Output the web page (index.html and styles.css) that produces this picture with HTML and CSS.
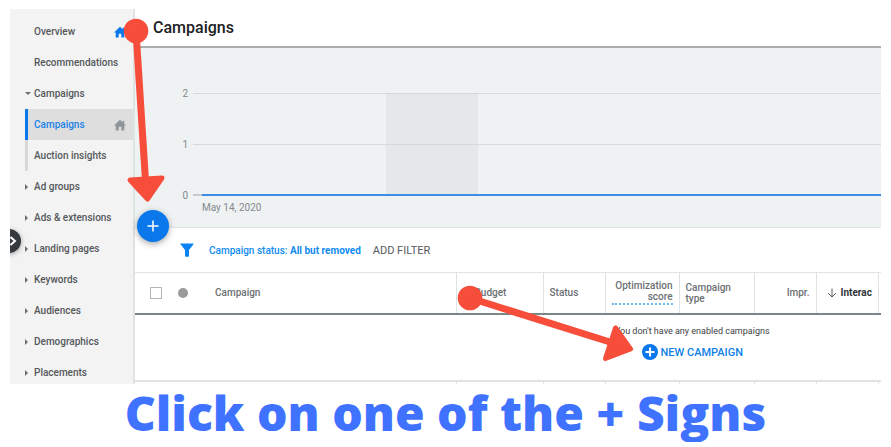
FILE: index.html
```html
<!DOCTYPE html>
<html lang="en">
<head>
  <meta charset="UTF-8" />
  <meta name="viewport" content="width=device-width, initial-scale=1.0" />
  <title>Campaigns</title>
  <link rel="stylesheet" href="styles.css">
</head>
<body>
  <div class="app">
    <nav class="sidebar">
      <ul class="nav-list">
        <li><a class="nav-link" href="#">Overview
          <svg class="home blue" viewBox="0 0 12 12"><path d="M6 .8 0 6.4h1.7V11.4h3V7.8h2.6v3.6h3V6.4H12L10.2 4.7V1.8H8.6v1.4z"/></svg></a></li>
        <li><a class="nav-link" href="#">Recommendations</a></li>
        <li><a class="nav-link open" href="#">Campaigns</a></li>
        <li><a class="nav-link sub active" href="#">Campaigns
          <svg class="home" viewBox="0 0 12 12"><path d="M6 .8 0 6.4h1.7V11.4h3V7.8h2.6v3.6h3V6.4H12L10.2 4.7V1.8H8.6v1.4z"/></svg></a></li>
        <li><a class="nav-link sub" href="#">Auction insights</a></li>
        <li><a class="nav-link closed" href="#">Ad groups</a></li>
        <li><a class="nav-link closed" href="#">Ads &amp; extensions</a></li>
        <li><a class="nav-link closed" href="#">Landing pages</a></li>
        <li><a class="nav-link closed" href="#">Keywords</a></li>
        <li><a class="nav-link closed" href="#">Audiences</a></li>
        <li><a class="nav-link closed" href="#">Demographics</a></li>
        <li><a class="nav-link closed" href="#">Placements</a></li>
      </ul>
    </nav>

    <main class="main">
      <header class="header">
        <h1>Campaigns</h1>
      </header>

      <section class="chart">
        <div class="chart-band"></div>
        <div class="chart-row"><span>2</span><i class="line"></i></div>
        <div class="chart-row"><span>1</span><i class="line"></i></div>
        <div class="chart-row zero"><span>0</span><i class="line"></i></div>
        <p class="chart-date">May 14, 2020</p>
      </section>

      <div class="filters">
        <svg class="funnel" viewBox="0 0 14 14"><path d="M.8.5h12.4q.8 0 .3.7L9 7v6q0 .8-.8.8H5.8Q5 13.800 5 13V7L.5 1.200Q0 .5.8.5z"/></svg>
        <button class="filter-status">Campaign status: <b>All but removed</b></button>
        <button class="filter-add">ADD FILTER</button>
      </div>

      <div class="table-wrap">
        <table>
          <colgroup>
            <col class="w-check"><col class="w-dot"><col class="w-name"><col class="w-budget"><col class="w-small">
            <col class="w-score"><col class="w-type"><col class="w-small"><col class="w-small"><col>
          </colgroup>
          <thead>
            <tr>
              <th class="check"><input type="checkbox" aria-label="Select all campaigns"></th>
              <th class="state"><span class="dot"></span></th>
              <th class="name">Campaign</th>
              <th class="budget">Budget</th>
              <th>Status</th>
              <th class="right"><span class="dotted">Optimization score</span></th>
              <th class="type">Campaign type</th>
              <th class="right">Impr.</th>
              <th class="sorted">
                <span class="sort">
                  <svg viewBox="0 0 10 10"><path d="M5 .5v8.500M1 5l4 4 4-4"/></svg>
                  <span class="sort-text">Interac</span>
                </span>
              </th>
              <th></th>
            </tr>
          </thead>
          <tbody>
            <tr>
              <td class="empty" colspan="10">
                <p>You don't have any enabled campaigns</p>
                <button class="new-campaign">
                  <svg viewBox="0 0 16 16"><circle cx="8" cy="8" r="8"/><path d="M8 3.500v9M3.500 8h9"/></svg>
                  NEW CAMPAIGN
                </button>
              </td>
            </tr>
            <tr class="total">
              <td></td><td></td><td></td><td></td><td></td><td></td><td></td><td></td><td></td><td></td>
            </tr>
          </tbody>
        </table>
      </div>
    </main>

    <button class="collapse" aria-label="Toggle menu">
      <svg viewBox="0 0 8 10"><path d="M1.500 1l4.500 4-4.500 4"/></svg>
    </button>
    <button class="fab" aria-label="Create">
      <svg viewBox="0 0 12 12"><path d="M6 .5v11M.5 6h11"/></svg>
    </button>

    <svg class="arrow arrow-fab" viewBox="0 0 42 190">
      <circle cx="16" cy="17" r="12.300"/>
      <path class="shaft" d="M16 17l9.500 150"/>
      <path class="head" d="M10 166l32-2-14.500 21z"/>
    </svg>
    <svg class="arrow arrow-new" viewBox="0 0 184 84">
      <circle cx="14" cy="16" r="12.300"/>
      <path class="shaft" d="M14 16l143 45"/>
      <path class="head" d="M159.500 46l15 21-25 9.500z"/>
    </svg>
  </div>

  <h2 class="caption">Click on one of the + Signs</h2>
</body>
</html>
```

FILE: styles.css
```css
* {
  box-sizing: border-box;
  margin: 0;
  padding: 0;
}
body {
  font-family: Roboto, sans-serif;
  font-size: 10px;
  background: #fff;
  color: #3c4043;
  padding: 9px 10px 0;
  overflow: hidden;
}
button {
  font: inherit;
  color: inherit;
  border: none;
  background: none;
  cursor: pointer;
}
.app {
  position: relative;
  display: flex;
  overflow: hidden;
}

/* sidebar */
.sidebar {
  width: 125px;
  flex: none;
  background: #f3f3f3;
  border-right: 2px solid #e0e3e4;
  padding-top: 7px;
  /* the list runs on below the fold */
  height: 375px;
  overflow: hidden;
}
.nav-list {
  list-style: none;
}
.nav-link {
  position: relative;
  display: flex;
  align-items: center;
  justify-content: space-between;
  height: 31px;
  padding: 0 7px 0 24px;
  color: #55585b;
  font-weight: 500;
  text-decoration: none;
  white-space: nowrap;
}
.sub {
  margin-left: 15px;
  padding-left: 6px;
  border-left: 3px solid #d8d8d8;
}
.active {
  color: #1a82e8;
  background: #dedede;
  border-left-color: #0a78ea;
}
.open::before,
.closed::before {
  content: "";
  position: absolute;
  left: 15px;
  top: 13px;
  border: 3px solid transparent;
}
.open::before {
  top: 14px;
  border-top-color: #6b6f72;
  border-bottom: none;
}
.closed::before {
  border-left-color: #6b6f72;
  border-right: none;
}
.home {
  width: 12px;
  height: 12px;
  fill: #8f9599;
}
.home.blue {
  fill: #0a78ea;
}

/* header and chart */
.main {
  flex: 1;
  min-width: 0;
}
.header {
  height: 39px;
  padding: 0 18px;
  border-bottom: 2px solid #a9adaf;
}
h1 {
  font-size: 16px;
  font-weight: 500;
  line-height: 38px;
  color: #202124;
}
.chart {
  position: relative;
  display: flex;
  flex-direction: column;
  gap: 37px;
  height: 180px;
  padding: 38px 0 0 46px;
  background: #eef2f3;
  border-bottom: 1px solid #e2e5e6;
  color: #85898c;
}
.chart-row {
  position: relative;
  display: flex;
  align-items: center;
  gap: 5px;
  height: 14px;
}
.chart-row span {
  width: 7px;
  text-align: right;
}
.line {
  flex: 1;
  height: 1px;
  background: #d5d9da;
}
.zero .line {
  height: 2px;
  border-left: 9px solid #c6cacc;
  background: #3c8ee8;
}
.chart-band {
  position: absolute;
  left: 251px;
  top: 45px;
  width: 92px;
  height: 103px;
  background: #e4e8ea;
}
.chart-date {
  margin: -38px 0 0 21px;
  line-height: 14px;
}

/* filter bar */
.filters {
  display: flex;
  align-items: center;
  height: 44px;
  padding-left: 45px;
}
.funnel {
  width: 14px;
  height: 14px;
  fill: #0a84f5;
}
.filter-status {
  margin-left: 15px;
  color: #0f8bf0;
  font-weight: 500;
}
.filter-status b {
  font-weight: 700;
}
.filter-add {
  margin-left: 12px;
  color: #55595c;
  font-size: 11px;
}

/* table */
.table-wrap {
  height: 112px;
  overflow: hidden;
}
table {
  width: 1115px;
  table-layout: fixed;
  border-collapse: collapse;
}
.w-check { width: 42px; }
.w-dot { width: 12px; }
.w-name { width: 267px; }
.w-budget { width: 87px; }
.w-small { width: 62px; }
.w-score { width: 74px; }
.w-type { width: 75px; }
th {
  height: 41px;
  padding: 0 6px;
  border: 1px solid #e0e3e4;
  border-bottom: 2px solid #7c8688;
  color: #6c7073;
  font-weight: 500;
  line-height: 11px;
  text-align: left;
}
th.check,
th.state {
  padding: 0;
  border-left: none;
  border-right: none;
  text-align: center;
}
th.name {
  padding-left: 26px;
  border-left: none;
}
th.budget {
  padding-left: 18px;
}
th.right {
  text-align: right;
}
th.sorted {
  padding: 0 0 0 10px;
  color: #303438;
  font-weight: 700;
}
.check input {
  display: block;
  appearance: none;
  width: 12px;
  height: 12px;
  margin: 0 auto;
  border: 1px solid #b4b6b7;
  background: #fff;
}
.dot {
  display: block;
  width: 10px;
  height: 10px;
  margin: 0 auto;
  border-radius: 50%;
  background: #9a9b9b;
}
.dotted {
  display: block;
  padding-bottom: 1px;
  border-bottom: 2px dotted #6bbcf5;
}
.sort {
  display: flex;
  align-items: center;
  gap: 4px;
}
.sort svg {
  flex: none;
  width: 10px;
  height: 10px;
  fill: none;
  stroke: #5a5e61;
}
.empty {
  height: 67px;
  padding-bottom: 8px;
  text-align: center;
}
.empty p {
  font-size: 9px;
  line-height: 14px;
}
.new-campaign {
  display: inline-flex;
  align-items: center;
  gap: 3px;
  margin-top: 6px;
  color: #0f7fe8;
  font-size: 11px;
  font-weight: 500;
}
.new-campaign svg {
  width: 16px;
  height: 16px;
  fill: #0a78ea;
  stroke-width: 2;
}
.new-campaign path {
  stroke: #fff;
}
.total td {
  height: 12px;
  border: 1px solid #e0e3e4;
  border-top-width: 2px;
}
.total td:nth-child(-n+2) {
  border-left: none;
  border-right: none;
}
.total td:nth-child(3) {
  border-left: none;
}

/* floating buttons */
.collapse,
.fab {
  position: absolute;
  display: flex;
  align-items: center;
  border-radius: 50%;
}
.collapse svg,
.fab svg {
  fill: none;
  stroke: #fff;
}
.collapse {
  left: -13px;
  top: 220px;
  width: 24px;
  height: 24px;
  padding-left: 12px;
  background: #35393c;
  box-shadow: 0 1px 5px rgba(0, 0, 0, 0.35);
}
.collapse svg {
  width: 8px;
  height: 10px;
  stroke-width: 2;
}
.fab {
  left: 127px;
  top: 201px;
  width: 32px;
  height: 32px;
  justify-content: center;
  background: #0a78ea;
  box-shadow: 0 2px 6px rgba(0, 0, 0, 0.35);
}
.fab svg {
  width: 12px;
  height: 12px;
  stroke-width: 1.5;
}

/* pointers to the two plus buttons */
.arrow {
  position: absolute;
  fill: #f64e3a;
  stroke: #f64e3a;
  stroke-width: 0;
  pointer-events: none;
}
.arrow .shaft {
  stroke-width: 7;
}
.arrow .head {
  stroke-width: 5;
  stroke-linejoin: round;
}
.arrow-fab {
  left: 110px;
  top: 5px;
  width: 42px;
  height: 190px;
  overflow: visible;
}
.arrow-new {
  left: 446px;
  top: 273px;
  width: 184px;
  height: 84px;
}

.caption {
  color: #3f72ff;
  font-family: "Open Sans", sans-serif;
  font-size: 48px;
  font-weight: 800;
  line-height: 58px;
  text-align: center;
  white-space: nowrap;
}
```
